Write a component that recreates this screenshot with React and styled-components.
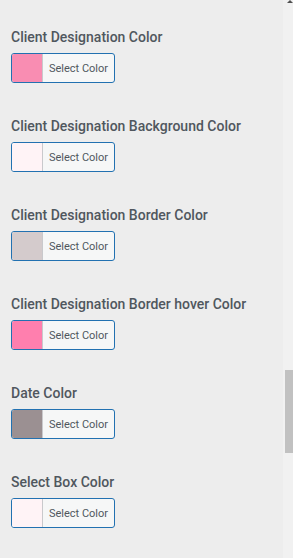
import React from "react";
import styled, { createGlobalStyle } from "styled-components";

const GlobalStyle = createGlobalStyle`
  html, body { margin: 0; padding: 0; }
  body {
    background: #ededed;
    font-family: Roboto, "Noto Sans", "Liberation Sans", sans-serif;
    overflow: hidden;
  }
`;

const Page = styled.div`
  display: flex;
  height: 558px;
  background: #ededed;
`;

const Panel = styled.div`
  flex: 1;
  display: flex;
  flex-direction: column;
  gap: 33px;
  padding: 27px 0 0 11px;
`;

const Field = styled.div`
  display: flex;
  flex-direction: column;
  align-items: flex-start;
  gap: 6px;
`;

const Label = styled.div`
  font-size: 14px;
  line-height: 20px;
  font-weight: 500;
  color: #50575e;
  white-space: nowrap;
`;

const ColorButton = styled.button`
  display: flex;
  align-items: stretch;
  box-sizing: border-box;
  width: 104px;
  height: 30px;
  padding: 0;
  border: 1px solid #2271b1;
  border-radius: 3px;
  background: #f6f7f7;
  overflow: hidden;
  cursor: pointer;
  font-family: inherit;
`;

const Swatch = styled.span`
  width: 30px;
  flex: none;
  background: ${(p) => p.$color};
  border-right: 1px solid #c9c9cc;
`;

const ButtonText = styled.span`
  flex: 1;
  display: flex;
  align-items: center;
  justify-content: center;
  font-size: 11px;
  color: #50575e;
`;

const ScrollTrack = styled.div`
  position: relative;
  width: 10px;
  background: #f1f1f1;
`;

const ScrollThumb = styled.div`
  position: absolute;
  left: 2px;
  right: 0;
  top: 370px;
  height: 83px;
  background: #c1c1c1;
`;

const ScrollArrow = styled.div`
  position: absolute;
  top: 0;
  right: 0;
  width: 0;
  height: 0;
  border-left: 3px solid transparent;
  border-right: 3px solid transparent;
  border-bottom: 3px solid #505050;
`;

const fields = [
  { label: "Client Designation Color", color: "#f98db2" },
  { label: "Client Designation Background Color", color: "#fff3f6" },
  { label: "Client Designation Border Color", color: "#d4cbcc" },
  { label: "Client Designation Border hover Color", color: "#ff7fae" },
  { label: "Date Color", color: "#9b9092" },
  { label: "Select Box Color", color: "#fff3f6" },
];

export default function App() {
  return (
    <>
      <GlobalStyle />
      <Page>
        <Panel>
          {fields.map((f) => (
            <Field key={f.label}>
              <Label>{f.label}</Label>
              <ColorButton type="button">
                <Swatch $color={f.color} />
                <ButtonText>Select Color</ButtonText>
              </ColorButton>
            </Field>
          ))}
        </Panel>
        <ScrollTrack>
          <ScrollArrow />
          <ScrollThumb />
        </ScrollTrack>
      </Page>
    </>
  );
}
